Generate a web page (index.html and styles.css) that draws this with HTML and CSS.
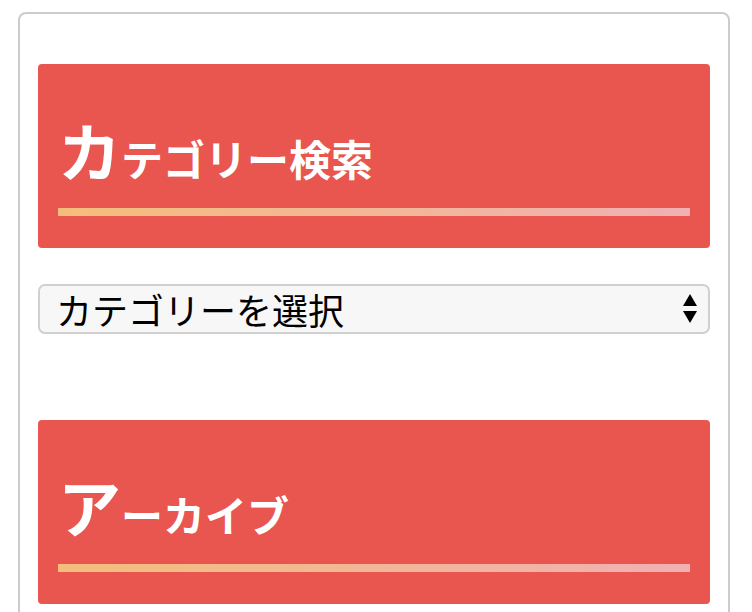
FILE: index.html
```html
<!DOCTYPE html>
<html lang="ja">
<head>
    <meta charset="UTF-8">
    <title>サイドバー</title>
    <link rel="stylesheet" href="styles.css">
</head>
<body>
    <div class="sidebar">
        <div class="widget">
            <h2 class="widget-title"><span class="initial">カ</span>テゴリー検索</h2>
            <div class="select-wrap">
                <select class="cat-select">
                    <option>カテゴリーを選択</option>
                </select>
                <svg class="select-arrows" width="14" height="30" viewBox="0 0 14 30">
                    <path d="M7 0 L14 12 L0 12 Z" fill="#000"/>
                    <path d="M0 17 L14 17 L7 29 Z" fill="#000"/>
                </svg>
            </div>
        </div>

        <div class="widget">
            <h2 class="widget-title"><span class="initial">ア</span>ーカイブ</h2>
        </div>
    </div>
</body>
</html>
```

FILE: styles.css
```css
body {
    margin: 0;
    font-family: "Noto Sans CJK JP", "Noto Sans", sans-serif;
    background-color: #fff;
}

.sidebar {
    margin: 12px 22px 0 18px;
    padding: 50px 18px 0;
    height: 640px;
    border: 2px solid #ccc;
    border-radius: 8px;
    box-sizing: border-box;
}

.widget {
    margin-bottom: 86px;
}

.widget-title {
    margin: 0 0 36px;
    padding: 51px 20px 32px;
    background-color: #e9554f;
    border-radius: 4px;
    color: #fff;
    font-size: 42px;
    font-weight: bold;
    line-height: 68px;
}

.widget-title::after {
    content: "";
    display: block;
    height: 8px;
    margin-top: 16px;
    background: linear-gradient(to right, #f5bd7c, #f1b0b3);
}

.initial {
    font-size: 63px;
}

.select-wrap {
    position: relative;
}

.cat-select {
    display: block;
    width: 100%;
    height: 50px;
    padding: 0 16px;
    -webkit-appearance: none;
    appearance: none;
    background-color: #f7f7f7;
    border: 2px solid #d0d0d0;
    border-radius: 7px;
    color: #000;
    font-family: "Noto Sans CJK JP", sans-serif;
    font-size: 36px;
    line-height: 46px;
}

.select-arrows {
    position: absolute;
    right: 13px;
    top: 10px;
    pointer-events: none;
}
```
